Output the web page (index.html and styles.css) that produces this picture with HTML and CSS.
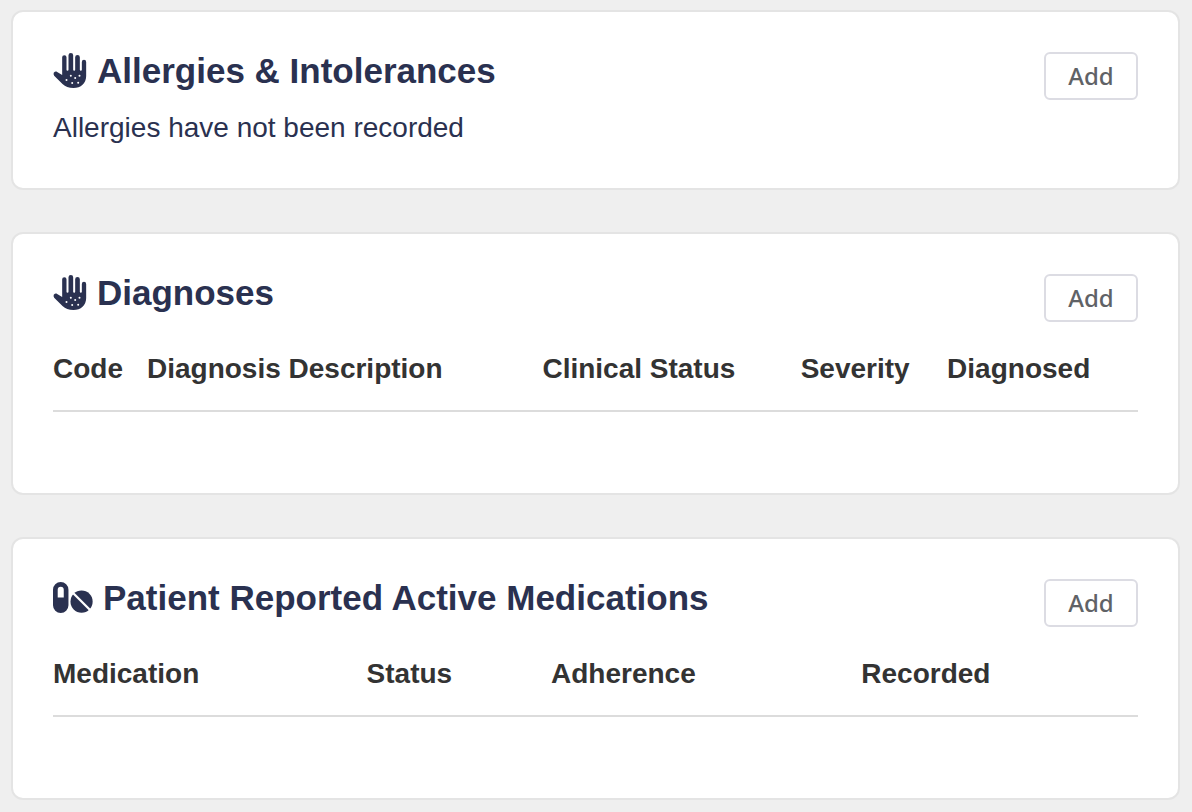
FILE: index.html
```html
<!DOCTYPE html>
<html lang="en">
<head>
<meta charset="utf-8">
<title>Patient chart</title>
<link rel="stylesheet" href="styles.css">
</head>
<body>
<svg class="symbols" aria-hidden="true">
  <symbol id="hand" viewBox="0 0 99 105">
    <path d="M26 13a6.500 6.500 0 0 1 13 0V50a3 3 0 0 0 6 0V7a7 7 0 0 1 14 0V50a3 3 0 0 0 6 0V13a7 7 0 0 1 14 0V50a3 3 0 0 0 6 0V27a6.500 6.500 0 0 1 13 0V69C98 91 82 105 60 105C45 105 36 101 27 93L2 68C-3 60 4 53 11 57L26 66Z"/>
    <g class="spots"><circle cx="52" cy="68" r="3"/><circle cx="78" cy="68" r="3"/><circle cx="39" cy="81" r="3"/><circle cx="65" cy="75" r="3"/><circle cx="56" cy="90" r="3"/><circle cx="74" cy="89" r="3"/></g>
  </symbol>
</svg>
<main class="chart">
  <section class="card">
    <header class="card-head">
      <h2 class="title"><svg class="icon hand" aria-hidden="true"><use href="#hand"/></svg>Allergies &amp; Intolerances</h2>
      <button class="add" type="button">Add</button>
    </header>
    <p class="note">Allergies have not been recorded</p>
  </section>
  <section class="card">
    <header class="card-head">
      <h2 class="title"><svg class="icon hand" aria-hidden="true"><use href="#hand"/></svg>Diagnoses</h2>
      <button class="add" type="button">Add</button>
    </header>
    <table class="records">
      <colgroup><col class="code"><col class="description"><col class="clinical"><col class="severity"><col></colgroup>
      <thead><tr><th>Code</th><th>Diagnosis Description</th><th>Clinical Status</th><th>Severity</th><th>Diagnosed</th></tr></thead>
    </table>
  </section>
  <section class="card">
    <header class="card-head">
      <h2 class="title"><svg class="icon pills" viewBox="0 0 119 92" aria-hidden="true"><path fill-rule="evenodd" d="M0 23a23 23 0 0 1 46 0V69a23 23 0 0 1-46 0ZM14 46H32V23a9 9 0 0 0-18 0Z"/><circle cx="85" cy="58" r="33"/><path class="score" d="M56 29L114 87"/></svg>Patient Reported Active Medications</h2>
      <button class="add" type="button">Add</button>
    </header>
    <table class="records">
      <colgroup><col class="medication"><col class="status"><col class="adherence"><col></colgroup>
      <thead><tr><th>Medication</th><th>Status</th><th>Adherence</th><th>Recorded</th></tr></thead>
    </table>
  </section>
</main>
</body>
</html>
```
FILE: styles.css
```css
* { box-sizing: border-box; }
body {
  margin: 0;
  background: #efefef;
  color: #2a3150;
  font-family: "Liberation Sans", Arial, sans-serif;
}
.symbols { display: none; }
.chart {
  display: flex;
  flex-direction: column;
  gap: 42px;
  padding: 10px 12px 11px 11px;
}
.card {
  padding: 40px;
  background: #fff;
  border: 2px solid #e4e4e4;
  border-radius: 12px;
}
.card-head {
  display: flex;
  align-items: flex-start;
  justify-content: space-between;
}
.title {
  display: flex;
  align-items: center;
  gap: 10px;
  margin: 0;
  font-size: 35px;
  line-height: 38px;
}
.icon { flex: none; margin-bottom: 1px; fill: currentColor; }
.hand { width: 34px; height: 35px; }
.pills { width: 40px; height: 31px; }
.spots { fill: #fff; }
.score { stroke: #fff; stroke-width: 7px; }
.add {
  width: 94px;
  height: 48px;
  padding: 0;
  background: #fff;
  border: 2px solid #dcdce3;
  border-radius: 6px;
  color: #606266;
  font: 500 24px/32px "Noto Sans", sans-serif;
}
.note {
  margin: 10px 0 2px;
  font-size: 28px;
  line-height: 36px;
}
.records {
  width: 100%;
  margin-bottom: 41px;
  border-collapse: collapse;
  table-layout: fixed;
  color: #333;
}
.records th {
  height: 89px;
  padding: 6px 0 0;
  border-bottom: 2px solid #dcdcdc;
  font-size: 28px;
  line-height: 32px;
  text-align: left;
  white-space: nowrap;
}
.code { width: 8.66%; }
.description { width: 36.45%; }
.clinical { width: 23.8%; }
.severity { width: 13.5%; }
.medication { width: 28.9%; }
.status { width: 17%; }
.adherence { width: 28.6%; }
```
